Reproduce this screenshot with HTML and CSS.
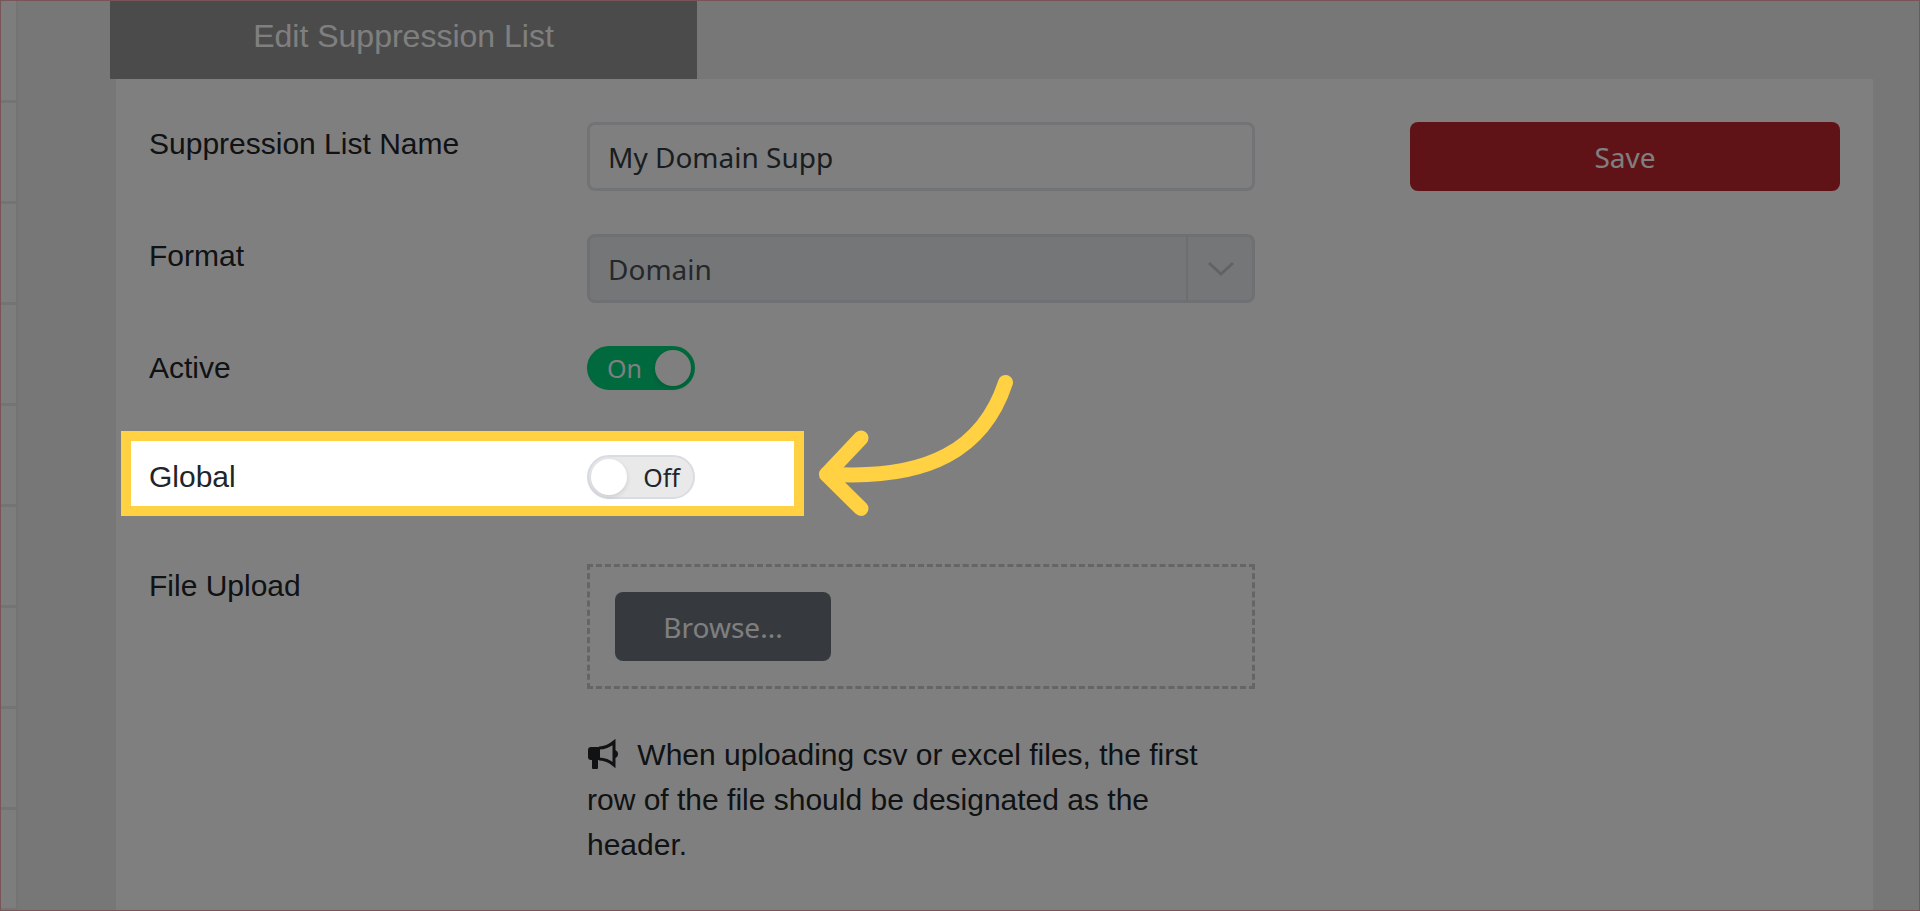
FILE: index.html
```html
<!DOCTYPE html>
<html lang="en">
<head>
    <meta charset="UTF-8">
    <meta name="viewport" content="width=device-width, initial-scale=1.0">
    <title>Edit Suppression List</title>

    <link rel="stylesheet" href="styles.css">
</head>
<body>
    <div class="sidebar">
        <div class="item"></div>
        <div class="item"></div>
        <div class="item"></div>
        <div class="item"></div>
        <div class="item"></div>
        <div class="item"></div>
        <div class="item"></div>
        <div class="item"></div>
        <div class="item"></div>
    </div>
    <main>
        <a href="#" class="tab">Edit Suppression List</a>
        <form class="panel">
            <div class="fields">
                <div class="row">
                    <label for="name">Suppression List Name</label>
                    <input type="text" id="name" class="control" value="My Domain Supp" spellcheck="false">
                </div>
                <div class="row">
                    <label for="format">Format</label>
                    <div class="select">
                        <select id="format" class="control" disabled>
                            <option>Domain</option>
                        </select>
                        <span class="arrow-box">
                            <svg width="28" height="16" viewBox="0 0 28 16"><path d="M2 2 L14 13 L26 2"/></svg>
                        </span>
                    </div>
                </div>
                <div class="row">
                    <label for="active">Active</label>
                    <div class="switch">
                        <input type="checkbox" id="active" checked>
                        <span>On</span>
                    </div>
                </div>
                <div class="row">
                    <label for="global">Global</label>
                    <div class="switch">
                        <input type="checkbox" id="global">
                        <span>Off</span>
                    </div>
                    <div class="highlight"></div>
                    <svg class="pointer" width="196" height="144" viewBox="818 374 196 144">
                        <path d="M1005.5 382.5 C984 448 930 481 827 474"/>
                        <path d="M861 438 L826.5 474.5 L861 508.5"/>
                    </svg>
                </div>
                <div class="row">
                    <label for="browse">File Upload</label>
                    <div>
                        <div class="upload">
                            <button type="button" id="browse">Browse...</button>
                        </div>
                        <p class="note">
                            <svg width="32" height="32" viewBox="0 0 32 32">
                                <path d="M4 8 H13 V21 H11 V29 Q11 30 10 30 H6 Q5 30 5 29 V21 H4 Q1 21 1 18 V11 Q1 8 4 8 Z"/>
                                <path class="line" d="M12 9 Q20 9 27 3 V26 Q20 20 12 20"/>
                                <path d="M28 11 Q31 12 31 15 Q31 18 28 19 Z"/>
                            </svg>
                            When uploading csv or excel files, the first row of the file should be designated as the header.
                        </p>
                    </div>
                </div>
            </div>
            <button type="submit" class="save">Save</button>
        </form>
    </main>
</body>
</html>
```
FILE: styles.css
```css
*{
    margin: 0;
    padding: 0;
    box-sizing: border-box;
}
body
{
    display: flex;
    min-height: 100vh;
    background-color: #eeeeee;
    color: #212529;
    font-family: "Liberation Sans", Arial, sans-serif;
    font-size: 30px;
}
/* thin frame round the window */
body::after
{
    content: "";
    position: fixed;
    inset: 0;
    z-index: 20;
    border: 1px solid #775558;
    pointer-events: none;
}
.sidebar
{
    width: 18px;
    height: 100vh;
    padding-top: 2px;
    overflow: hidden;
    background-color: #f8fbf9;
    border-right: 2px solid #e6e9ec;
}
.item
{
    height: 101px;
    border-bottom: 3px solid #e8e8ec;
}
main
{
    flex: 1;
    display: flex;
    flex-direction: column;
    padding: 0 47px 0 92px;
}
.tab
{
    width: 587px;
    height: 79px;
    padding-bottom: 6px;
    display: flex;
    align-items: center;
    justify-content: center;
    background-color: #969696;
    color: #ffffff;
    font-size: 32px;
    text-decoration: none;
}
.panel
{
    flex: 1;
    margin-left: 6px;
    padding: 43px 33px;
    display: grid;
    grid-template-columns: minmax(0, 1fr) 430px;
    gap: 155px;
    align-items: start;
    background-color: #ffffff;
}
.fields
{
    display: flex;
    flex-direction: column;
    gap: 43px;
}
.row
{
    position: relative;
    display: grid;
    grid-template-columns: 438px minmax(0, 1fr);
    align-items: start;
    min-height: 66px;
}
.row label
{
    line-height: 44px;
}
.control
{
    display: block;
    width: 100%;
    height: 69px;
    padding: 0 18px;
    border: 3px solid #e2e6ea;
    border-radius: 8px;
    background-color: #ffffff;
    color: #343a40;
    font-family: "Noto Sans", sans-serif;
    font-size: 28px;
}
.select
{
    position: relative;
}
select.control
{
    appearance: none;
    border-color: #dde1e6;
    background-color: #e9edf1;
    color: #4a5056;
    opacity: 1;
}
.arrow-box
{
    position: absolute;
    top: 2px;
    right: 2px;
    bottom: 2px;
    width: 67px;
    display: flex;
    align-items: center;
    justify-content: center;
    border-left: 2px solid #d8dce0;
}
.arrow-box path
{
    fill: none;
    stroke: #c0c4c8;
    stroke-width: 3;
}
.switch
{
    position: relative;
    width: 108px;
    height: 44px;
    font-family: "Noto Sans", sans-serif;
    font-size: 25px;
    line-height: 44px;
}
.switch input
{
    display: block;
    appearance: none;
    width: 108px;
    height: 44px;
    padding: 2px;
    border: 2px solid #d8dde4;
    border-radius: 22px;
    background-color: #e9e9ea;
}
.switch input::before
{
    content: "";
    display: block;
    width: 36px;
    height: 36px;
    border-radius: 50%;
    background-color: #ffffff;
    box-shadow: 0 2px 5px rgba(0, 0, 0, 0.12);
}
.switch input:checked
{
    border-color: #00d27a;
    background-color: #00d27a;
}
.switch input:checked::before
{
    margin-left: auto;
}
.switch span
{
    position: absolute;
    top: 0;
    right: 15px;
    pointer-events: none;
}
.switch input:checked + span
{
    right: auto;
    left: 20px;
    color: #ffffff;
}
.upload
{
    padding: 25px;
    border: 3px dashed #c6cacf;
}
button
{
    height: 69px;
    border: 0;
    border-radius: 8px;
    color: #ffffff;
    font-family: "Noto Sans", sans-serif;
    font-size: 28px;
    cursor: pointer;
}
#browse
{
    display: block;
    width: 216px;
    background-color: #6c757d;
}
.save
{
    background-color: #c0272e;
}
.note
{
    margin-top: 43px;
    padding-right: 40px;
    line-height: 45px;
}
.note svg
{
    margin-right: 10px;
    vertical-align: -6px;
    fill: #212529;
}
.note .line
{
    fill: none;
    stroke: #212529;
    stroke-width: 3;
}
/* dims everything outside the highlighted row */
.highlight
{
    position: absolute;
    top: -24px;
    left: -28px;
    z-index: 10;
    width: 683px;
    height: 85px;
    border: 10px solid #ffd143;
    box-shadow: 0 0 0 2000px rgba(0, 0, 0, 0.5);
    pointer-events: none;
}
.pointer
{
    position: absolute;
    top: -81px;
    left: 669px;
    z-index: 11;
    fill: none;
    stroke: #ffd143;
    stroke-width: 15;
    stroke-linecap: round;
    stroke-linejoin: round;
}
```
